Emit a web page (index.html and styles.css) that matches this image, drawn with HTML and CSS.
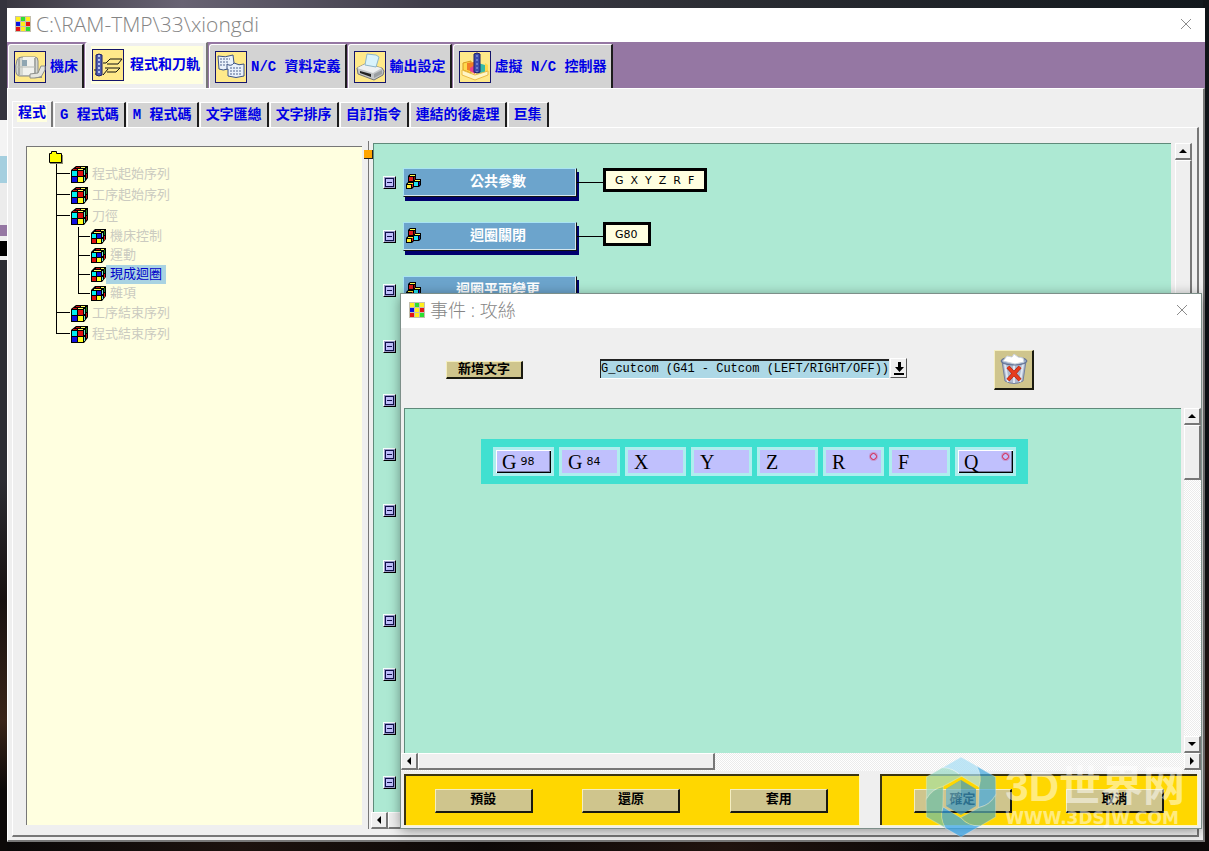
FILE: index.html
```html
<!DOCTYPE html>
<html lang="zh-Hant">
<head>
<meta charset="utf-8">
<title>C:\RAM-TMP\33\xiongdi</title>
<link rel="stylesheet" href="styles.css">
</head>
<body>
<svg class="defs" aria-hidden="true">
  <symbol id="logo" viewBox="0 0 16 16">
    <rect width="16" height="16" fill="#c4bfae"/>
    <path fill="#ffef1a" d="M1 1h4v4H1zM11 1h4v4h-4zM6 6h4v4H6zM6 11h4v4H6z"/>
    <path fill="#2ce030" d="M6 1h4v4H6zM11 11h4v4h-4z"/>
    <path fill="#0a14e0" d="M1 6h4v4H1z"/>
    <path fill="#e61414" d="M11 6h4v4h-4zM1 11h4v4H1z"/>
  </symbol>
  <symbol id="close" viewBox="0 0 12 12"><path d="M1 1l10 10M11 1L1 11" stroke="#8c8c8c" fill="none"/></symbol>
  <symbol id="cube" viewBox="0 0 17 17">
    <path d="M0 4L5 0H17V12L13 17H0z" fill="#000"/>
    <path fill="#00f0f0" d="M1 5h5v5H1z"/><path fill="#e01010" d="M7 5h5v5H7z"/>
    <path fill="#1010e0" d="M1 11h5v5H1z"/><path fill="#ffff20" d="M7 11h5v5H7z"/>
    <path fill="#c01010" d="M5 1h4v1H5zM2 3h4v1H2z"/><path fill="#ffff60" d="M10 1h4v1h-4zM7 3h5v1H7z"/>
    <path fill="#70e8d0" d="M13 4h1v5h-1zM13 11h1v4h-1z"/><path fill="#208020" d="M15 2h1v5h-1z"/><path fill="#c01010" d="M15 8h1v4h-1z"/>
  </symbol>
  <symbol id="subcube" viewBox="0 0 15 15">
    <path d="M0 4L4 0H15V10L11 15H0z" fill="#000"/>
    <path fill="#00f0f0" d="M1 5h4v4H1z"/><path fill="#1010e0" d="M6 5h4v4H6z"/>
    <path fill="#e01010" d="M1 10h4v4H1z"/><path fill="#ffff20" d="M6 10h4v4H6z"/>
    <path fill="#c01010" d="M5 1h4v1H5z"/><path fill="#ffff60" d="M10 1h3v1h-3zM3 3h7v1H3z"/>
    <path fill="#70e8d0" d="M11 4h1v4h-1zM11 10h1v3h-1z"/><path fill="#208020" d="M13 2h1v4h-1z"/><path fill="#e01010" d="M13 7h1v4h-1z"/>
  </symbol>
  <symbol id="blocks" viewBox="0 0 16 16">
    <path fill="#000" d="M2 2l2-2h6v6L8 8H2zM7 7l2-2h6v6l-2 2H7zM0 10l2-2h6v5l-2 2H0z"/>
    <path fill="#e01818" d="M3 3h4v4H3z"/><path fill="#ffff50" d="M4 1h5v1H4z"/><path fill="#901010" d="M8 3h1v3H8z"/>
    <path fill="#20e0f0" d="M8 8h4v4H8z"/><path fill="#ffff50" d="M9 6h5v1H9z"/><path fill="#1010c0" d="M13 8h1v3h-1z"/>
    <path fill="#ffee30" d="M1 11h4v3H1zM2 9h5v1H2z"/><path fill="#e01818" d="M6 10h1v3H6z"/>
  </symbol>
  <symbol id="up" viewBox="0 0 8 4"><path d="M0 4h8L4 0z"/></symbol>
  <symbol id="left" viewBox="0 0 4 8"><path d="M4 0v8L0 4z"/></symbol>
  <symbol id="blade" viewBox="0 0 72 82"><path d="M17 12L36 1 52 10Q58 20 54 31L36 20Q29 12 17 12z"/></symbol>
</svg>

<main class="window">
  <header class="titlebar">
    <svg class="logo"><use href="#logo"/></svg>
    <h1 class="title path">C:\RAM-TMP\33\xiongdi</h1>
    <button class="close" aria-label="關閉"><svg class="closeicon"><use href="#close"/></svg></button>
  </header>

  <nav class="ribbon">
    <button class="tab">
      <svg class="tabicon" viewBox="0 0 32 32"><rect x=".5" y=".5" width="31" height="31" fill="#ffe98a" stroke="#15156a"/><path d="M2 21q-1-6 1-12 1-3 5-3h13q3 0 3 4v13l-4 2H5q-3-1-3-4z" fill="#d5d8d2" stroke="#85888a"/><path d="M9 6h12v18H9z" fill="#f1f2ee"/><path d="M5 7v17M21 7v17" stroke="#a7aaa6" stroke-width="2"/><path d="M8 9h5v6H8z" fill="#8fa6b2"/><path d="M3 16h18" stroke="#b7bab4"/><path d="M16 23l8-1 3-7h4v4l-4 7-6 1h-5z" fill="#e4e5df" stroke="#8c8e8a"/><path d="M20 27l8-2v2h-8z" fill="#8c8e8a"/></svg>機床</button>
    <button class="tab active"><span class="highlight">
      <svg class="tabicon" viewBox="0 0 32 32"><rect x=".5" y=".5" width="31" height="31" fill="#ffe98a" stroke="#15156a"/><path d="M11 14h3l4-4h12l-4 5H15M2 21h8M13 19h15l-4 4h-9M11 26l5-6M3 25h6" fill="none" stroke="#111"/><path d="M4 6q3-2 6 0v20q-3 2-6 0z" fill="#4c5cb0" stroke="#202068"/><path d="M7 6v20" stroke="#b8c4ef" stroke-width="2" stroke-dasharray="2 2"/></svg>程式和刀軌</span></button>
    <button class="tab">
      <svg class="tabicon" viewBox="0 0 32 32"><rect x=".5" y=".5" width="31" height="31" fill="#ffe98a" stroke="#15156a"/><path d="M3 5q7 2 15-1l1 8q5 3 10 1v12q-8 3-16 0v-7q-5 2-9 0z" fill="#e9f1fb" stroke="#3c5384"/><path d="M12 18v-5q4 3 7-1" fill="none" stroke="#3c5384"/><path d="M5 8h10M5 11h8M5 14h6M15 17h12M15 20h12M15 23h12" stroke="#50658f" stroke-dasharray="2 1"/></svg>N/C 資料定義</button>
    <button class="tab">
      <svg class="tabicon" viewBox="0 0 32 32"><rect x=".5" y=".5" width="31" height="31" fill="#ffe98a" stroke="#15156a"/><path d="M3 17l8-4 17 4 2 3-1 4-9 5L4 23z" fill="#c3c6c8" stroke="#777"/><path d="M3 17l8-4 17 4-9 5z" fill="#eef0f0"/><path d="M13 3l9 1 3 2-3 10-11-2z" fill="#d9f3fb" stroke="#8eb6c8"/><path d="M6 20l11 3v3L6 22z" fill="#222"/><path d="M20 23l8-4v4l-8 4z" fill="#9b9fa2"/></svg>輸出設定</button>
    <button class="tab">
      <svg class="tabicon" viewBox="0 0 32 32"><rect x=".5" y=".5" width="31" height="31" fill="#ffe98a" stroke="#15156a"/><path d="M4 12l8-2v12l-8-3z" fill="#ffd94d" stroke="#d79b20"/><path d="M8 12l7-1v10l-7-2z" fill="#f27d27"/><path d="M11 17l5-3v9l-5-3z" fill="#e8418d"/><path d="M19 12l7 2v7l-7 3z" fill="#37b8a8"/><path d="M26 12l3 2v7l-3 1z" fill="#ffd94d"/><path d="M3 19l13 5 13-4v4l-13 5-13-5z" fill="#fff5c5" stroke="#ebbb45"/><path d="M15 3q3-2 6 0v18q-3 2-6 0z" fill="#3c4cb0" stroke="#202068"/><path d="M18 4v17" stroke="#9eaee8" stroke-dasharray="2 2"/></svg>虛擬 N/C 控制器</button>
  </nav>

  <section class="page">
    <nav class="subtabs">
      <button class="subtab current"><span class="mark">程式</span></button>
      <button class="subtab">G 程式碼</button>
      <button class="subtab">M 程式碼</button>
      <button class="subtab">文字匯總</button>
      <button class="subtab">文字排序</button>
      <button class="subtab">自訂指令</button>
      <button class="subtab">連結的後處理</button>
      <button class="subtab">巨集</button>
    </nav>

    <div class="panel">
      <aside class="tree">
        <svg class="folder" viewBox="0 0 14 13"><path d="M1 12h13V4" fill="none" stroke="#8a8a70" stroke-width="2"/><path d="M.5 2.5h2v-2h5v2h5v9H.5z" fill="#ff0" stroke="#000"/></svg>
        <ul class="branch">
          <li class="node"><a class="item" href="#"><svg class="cube"><use href="#cube"/></svg>程式起始序列</a></li>
          <li class="node"><a class="item" href="#"><svg class="cube"><use href="#cube"/></svg>工序起始序列</a></li>
          <li class="node"><a class="item" href="#"><svg class="cube"><use href="#cube"/></svg>刀徑</a>
            <ul class="branch sub">
              <li class="node"><a class="item" href="#"><svg class="cube"><use href="#subcube"/></svg><span class="label">機床控制</span></a></li>
              <li class="node"><a class="item" href="#"><svg class="cube"><use href="#subcube"/></svg><span class="label">運動</span></a></li>
              <li class="node"><a class="item" href="#"><svg class="cube"><use href="#subcube"/></svg><span class="label selected">現成迴圈</span></a></li>
              <li class="node"><a class="item" href="#"><svg class="cube"><use href="#subcube"/></svg><span class="label">雜項</span></a></li>
            </ul>
          </li>
          <li class="node"><a class="item" href="#"><svg class="cube"><use href="#cube"/></svg>工序結束序列</a></li>
          <li class="node"><a class="item" href="#"><svg class="cube"><use href="#cube"/></svg>程式結束序列</a></li>
        </ul>
      </aside>
      <div class="splitter"><span class="sash"></span></div>
      <div class="viewport">
        <div class="canvas">
          <div class="row"><button class="fold" aria-label="收合"></button><button class="event"><svg class="blocks"><use href="#blocks"/></svg><span class="name">公共參數</span></button><span class="wire"></span><span class="words"><span>G</span><span>X</span><span>Y</span><span>Z</span><span>R</span><span>F</span></span></div>
          <div class="row"><button class="fold" aria-label="收合"></button><button class="event"><svg class="blocks"><use href="#blocks"/></svg><span class="name">迴圈關閉</span></button><span class="wire"></span><span class="words">G80</span></div>
          <div class="row"><button class="fold" aria-label="收合"></button><button class="event"><svg class="blocks"><use href="#blocks"/></svg><span class="name">迴圈平面變更</span></button></div>
          <div class="row apart"><button class="fold" aria-label="收合"></button></div>
          <div class="row"><button class="fold" aria-label="收合"></button></div>
          <div class="row"><button class="fold" aria-label="收合"></button></div>
          <div class="row apart"><button class="fold" aria-label="收合"></button></div>
          <div class="row apart"><button class="fold" aria-label="收合"></button></div>
          <div class="row"><button class="fold" aria-label="收合"></button></div>
          <div class="row"><button class="fold" aria-label="收合"></button></div>
          <div class="row"><button class="fold" aria-label="收合"></button></div>
          <div class="row"><button class="fold" aria-label="收合"></button></div>
        </div>
        <div class="bar vertical"><button class="arrow" aria-label="向上"><svg class="tri"><use href="#up"/></svg></button><span class="thumb tall"></span></div>
        <div class="bar horizontal"><button class="arrow" aria-label="向左"><svg class="tri side"><use href="#left"/></svg></button><span class="thumb"></span></div>
      </div>
    </div>
  </section>
</main>

<section class="dialog" role="dialog" aria-labelledby="dlg">
  <header class="titlebar">
    <svg class="logo"><use href="#logo"/></svg>
    <h2 class="title" id="dlg">事件 : 攻絲</h2>
    <button class="close" aria-label="關閉"><svg class="closeicon"><use href="#close"/></svg></button>
  </header>
  <div class="toolbar">
    <button class="push add">新增文字</button>
    <div class="combo">
      <select class="pick" aria-label="文字"><option>G_cutcom (G41 - Cutcom (LEFT/RIGHT/OFF))</option></select>
      <button class="drop" aria-label="展開"><svg class="dropicon" viewBox="0 0 10 13"><path d="M4 0h3v5h3L5.500 10 1 5h3zM0 11h10v2H0z"/></svg></button>
    </div>
    <button class="push trash" aria-label="刪除"><svg class="bin" viewBox="0 0 28 32"><path d="M2 8l3 20q9 5 18 0l3-20z" fill="#aeb9cf" stroke="#75809c"/><path d="M5 11l3 18M14 12v18M23 11l-3 18" stroke="#dfe6f2" stroke-width="2"/><ellipse cx="14" cy="8" rx="13" ry="4" fill="#8fa0c0" stroke="#5d6b8c"/><path d="M3 8l4-5 5 1 2-3 4 3 5 1 1 4-9 2z" fill="#fff" stroke="#ccd3dd"/><path d="M8 14l12 13M20 14L8 27" stroke="#a01c0c" stroke-width="4"/><path d="M8 14l12 13M20 14L8 27" stroke="#e63c1e" stroke-width="3"/></svg></button>
  </div>
  <div class="viewport editor">
    <div class="canvas">
      <div class="strip">
        <button class="word raised">G<small class="num">98</small></button>
        <button class="word">G<small class="num">84</small></button>
        <button class="word">X</button>
        <button class="word">Y</button>
        <button class="word">Z</button>
        <button class="word">R<span class="dot"></span></button>
        <button class="word">F</button>
        <button class="word raised">Q<span class="dot"></span></button>
      </div>
    </div>
    <div class="bar vertical"><button class="arrow" aria-label="向上"><svg class="tri"><use href="#up"/></svg></button><span class="thumb"></span><button class="arrow" aria-label="向下"><svg class="tri flip"><use href="#up"/></svg></button></div>
    <div class="bar horizontal"><button class="arrow" aria-label="向左"><svg class="tri side"><use href="#left"/></svg></button><span class="thumb"></span><button class="arrow" aria-label="向右"><svg class="tri side flip"><use href="#left"/></svg></button></div>
  </div>
  <footer class="actions">
    <div class="group three"><button class="push">預設</button><button class="push">還原</button><button class="push">套用</button></div>
    <div class="group two"><button class="push">確定</button><button class="push">取消</button></div>
  </footer>
</section>

<div class="watermark">
  <svg class="hex" viewBox="0 0 72 82">
    <g stroke="#fff" stroke-opacity=".35">
      <use href="#blade" fill="#a9dff5"/>
      <use href="#blade" fill="#45aae0" transform="rotate(60 36 41)"/>
      <use href="#blade" fill="#5aaeb0" transform="rotate(120 36 41)"/>
      <use href="#blade" fill="#34a4ea" transform="rotate(180 36 41)"/>
      <use href="#blade" fill="#6fc0a8" transform="rotate(240 36 41)"/>
      <use href="#blade" fill="#9ddcc8" transform="rotate(300 36 41)"/>
    </g>
    <path d="M36 24l15 9v17l-15 9-15-9V33z" fill="#3e9ac4"/>
    <path d="M21 33l15-9v17l-15 9z" fill="#6cb6cc"/>
  </svg>
  <div class="brand"><span class="big">3D世界网</span><span class="site">WWW.3DSJW.COM</span></div>
</div>
</body>
</html>
```
FILE: styles.css
```css
* { box-sizing: border-box; }

html, body { height: 100%; }

body {
  margin: 0;
  position: relative;
  overflow: hidden;
  font: 14px/18px "Liberation Mono", "Noto Sans CJK TC", monospace;
  background:
    linear-gradient(#34333d 0 120px, #f4f4f4 120px 156px, #a5cfdf 156px 183px, #ececec 183px 225px, #9577a3 225px 236px, #eee 236px 241px, #000 241px 256px, #eee 256px 260px, #2c2d33 260px 480px, #17110f 600px, #3a2519 720px, #0c0908 790px) left top / 7px 100% no-repeat,
    linear-gradient(#101418, #0c1014 60%, #2a1710 90%, #0a0808) right top / 6px 100% no-repeat,
    linear-gradient(90deg, #38363f, #686373 15%, #413f4b 35%, #2b2d33 60%, #12181d) left top / 100% 8px no-repeat,
    linear-gradient(90deg, #0a0808, #1c120e 20%, #0d0908 40%, #20130e 60%, #0b0808 80%);
}

button { font: inherit; color: inherit; border: 0; padding: 0; margin: 0; background: none; }
svg { display: block; flex: none; }
.defs { position: absolute; width: 0; height: 0; }

.window {
  position: absolute;
  inset: 8px 4px 9px 7px;
  display: flex;
  flex-direction: column;
  background: #efefef;
}

.dialog {
  position: absolute;
  inset: 294px 8px 23px 401px;
  display: flex;
  flex-direction: column;
  background: #efefef;
  box-shadow: 0 0 0 1px #7d8f89, 0 2px 12px rgba(0, 0, 0, .45);
}

.titlebar {
  flex: none;
  height: 34px;
  display: flex;
  align-items: center;
  padding: 0 13px 2px 8px;
  background: #fff;
}
.logo { width: 16px; height: 16px; }
.title {
  flex: 1;
  margin: 0 0 0 5px;
  font: 300 18px/24px "Open Sans", "Noto Sans CJK TC", sans-serif;
  color: #858585;
}
.path { font-size: 21px; }
.closeicon { width: 12px; height: 12px; }

.ribbon {
  flex: none;
  height: 46px;
  display: flex;
  align-items: flex-end;
  gap: 1px;
  padding-left: 1px;
  background: #9577a3;
}
.tab {
  height: 44px;
  display: flex;
  align-items: center;
  gap: 4px;
  padding: 0 4px 0 5px;
  border-top: 1px solid #fff;
  border-left: 1px solid #fff;
  border-right: 2px solid #1c1c1c;
  border-radius: 3px 0 0 0;
  background: #d3d3d3;
  color: #0000e6;
  font-weight: bold;
}
.tab.active { height: 46px; padding: 0 3px 2px 5px; background: #efefef; border-right-color: #777; }
.highlight { display: flex; align-items: center; gap: 6px; height: 38px; padding: 0 3px 0 1px; background: #ffffe0; }
.tabicon { width: 32px; height: 32px; }

.page {
  flex: 1;
  min-height: 0;
  display: flex;
  flex-direction: column;
  padding: 12px 4px 3px 4px;
  border: 1px solid #fff;
  border-right: 2px solid #777;
  border-bottom: 2px solid #777;
}
.subtabs { display: flex; align-items: flex-end; gap: 1px; height: 26px; }
.subtab {
  height: 25px;
  padding: 0 5px;
  border-top: 1px solid #fff;
  border-left: 1px solid #fff;
  border-right: 2px solid #1c1c1c;
  background: #d3d3d3;
  color: #0000e6;
  font-weight: bold;
  white-space: nowrap;
}
.subtab.current { height: 27px; margin-bottom: -1px; background: #efefef; border-right-color: #777; padding: 0 4px 4px; }
.mark { display: block; padding: 0 1px; background: #ffffe0; }

.panel {
  flex: 1;
  min-height: 0;
  display: flex;
  padding: 13px 5px 6px 13px;
  border: 1px solid #fff;
  border-right: 2px solid #777;
  border-bottom: 2px solid #777;
}
.tree {
  flex: 0 0 336px;
  margin: 5px 0 4px;
  padding: 4px 0;
  border-top: 1px solid #777;
  border-left: 1px solid #777;
  background: #ffffe0;
  font-size: 13px;
}
.folder { width: 14px; height: 13px; margin-left: 22px; }
.branch { margin: 0 0 0 29px; padding: 0; list-style: none; }
.node { position: relative; padding-left: 15px; }
.node::before { content: ""; position: absolute; left: 0; top: 9px; width: 14px; height: 1px; background: #000; }
.node::after { content: ""; position: absolute; left: 0; top: 0; bottom: 0; width: 1px; background: #000; }
.node:last-child::after { bottom: auto; height: 10px; }
.item { display: flex; align-items: center; gap: 4px; height: 21px; color: #cbcbc0; text-decoration: none; }
.cube { width: 17px; height: 17px; }
.sub { margin-left: 7px; }
.sub .node { padding-left: 13px; }
.sub .node::before { width: 12px; }
.sub .item { height: 19px; gap: 0; }
.sub .cube { width: 15px; height: 15px; }
.label { padding: 0 4px; line-height: 19px; }
.selected { background: #a9d3e2; color: #0000c8; }

.splitter { position: relative; flex: 0 0 9px; background: linear-gradient(#777, #777) 6px 0 / 1px 100% no-repeat; }
.sash { position: absolute; z-index: 1; left: 2px; top: 9px; width: 9px; height: 9px; background: #ffa500; border-right: 1px solid #222; border-bottom: 1px solid #222; }

.viewport {
  flex: 1;
  min-width: 0;
  min-height: 0;
  margin-top: 2px;
  display: grid;
  grid-template: minmax(0, 1fr) 17px / minmax(0, 1fr) 17px;
}
.canvas {
  margin: 0 4px 0 2px;
  padding: 11px 0 0 9px;
  overflow: hidden;
  border-top: 1px solid #5f8a7a;
  border-left: 1px solid #5f8a7a;
  background: #ade9d3;
}
.row { display: flex; align-items: center; height: 54px; }
.apart { margin-top: 2px; }
.fold {
  width: 13px;
  height: 13px;
  margin-right: 7px;
  border: 1px solid #f4fffb;
  border-right-color: #000;
  border-bottom-color: #000;
  background: linear-gradient(#10104a, #10104a) center / 5px 1px no-repeat #c0c0fd;
  box-shadow: inset 0 0 0 1px #9a9ac8, inset 0 0 0 2px #10104a;
}
.event {
  width: 174px;
  height: 29px;
  display: flex;
  align-items: center;
  padding: 0 2px;
  border: 1px solid #a9e4f2;
  border-right: 1px solid #111;
  border-bottom: 1px solid #111;
  background: #6ca4cc;
  box-shadow: inset -1px -1px #d5e6ee, 2px 4px #00006e;
  color: #fff;
  font-weight: bold;
}
.blocks { width: 16px; height: 16px; }
.name { flex: 1; text-align: center; }
.wire { width: 26px; height: 1px; background: #000; }
.words {
  display: flex;
  gap: 7px;
  align-items: center;
  height: 24px;
  margin-bottom: 4px;
  padding: 1px 10px 0 9px;
  border: 3px solid #000;
  background: #ffffe0;
  font: 11px/16px "DejaVu Sans", sans-serif;
}

.bar {
  display: flex;
  background: repeating-conic-gradient(#fff 0 25%, #ebebeb 0 50%) 0 0 / 2px 2px;
}
.bar.vertical { flex-direction: column; }
.bar.horizontal { grid-column: 1 / 3; }
.arrow, .thumb {
  flex: none;
  background: #efefef;
  border: 1px solid #fff;
  border-right: 2px solid #777;
  border-bottom: 2px solid #777;
}
.arrow { width: 17px; height: 17px; display: grid; place-items: center; }
.tri { width: 8px; height: 4px; }
.tri.side { width: 4px; height: 8px; }
.flip { transform: rotate(180deg); }
.thumb.tall { flex: 1; }
.horizontal .thumb { width: 208px; }

.toolbar { flex: none; height: 80px; display: flex; align-items: center; padding-left: 45px; }
.push {
  background: #cfc58d;
  border: 1px solid #f4eec0;
  border-right: 2px solid #1a1a10;
  border-bottom: 2px solid #1a1a10;
  color: #000;
  font-size: 13px;
  font-weight: bold;
}
.add { width: 77px; height: 18px; margin-top: 4px; line-height: 15px; }
.combo { display: flex; align-items: center; gap: 1px; margin-left: 77px; }
.pick {
  appearance: none;
  width: 289px;
  height: 19px;
  margin: 0;
  padding: 0;
  border: 0 solid #222;
  border-width: 2px 0 0 1px;
  border-radius: 0;
  box-shadow: 0 1px #fff;
  background: #add8e6;
  color: #000;
  font: 12px/16px "Liberation Mono", monospace;
}
.drop { width: 17px; height: 20px; display: grid; place-items: center; border: 1px solid #fff; border-right: 1px solid #555; border-bottom: 1px solid #555; }
.dropicon { width: 10px; height: 13px; }
.trash { width: 40px; height: 40px; margin-left: 87px; margin-top: 3px; display: grid; place-items: center; }
.bin { width: 28px; height: 32px; }

.editor { margin: 0; grid-template-rows: minmax(0, 1fr) 18px; }
.editor .canvas { margin: 0 3px 0 3px; padding: 30px 0 0 76px; }
.editor .vertical .thumb { height: 55px; }
.editor .vertical .arrow:last-child { margin-top: auto; }
.editor .horizontal .arrow:last-child { margin-left: auto; }
.editor .horizontal .thumb { width: 297px; height: 17px; }

.strip { display: inline-flex; gap: 5px; padding: 8px 12px; background: #40e0d0; vertical-align: top; }
.word {
  position: relative;
  width: 61px;
  height: 29px;
  display: flex;
  align-items: center;
  gap: 4px;
  padding: 0 0 0 6px;
  border: 3px solid #afeeee;
  background: #c0c0fd;
  color: #000;
  font: 20px/22px "Liberation Serif", serif;
}
.raised { box-shadow: inset 1px 1px #fff, inset -1px -1px #000, inset -2px -2px #77779c; }
.num { font: 11px/16px "DejaVu Sans", sans-serif; }
.dot { position: absolute; right: 4px; top: 3px; width: 7px; height: 7px; border: 1px solid #d81840; border-radius: 50%; box-shadow: 0 0 0 1px rgba(216, 24, 64, .25); }

.actions { flex: none; display: grid; grid-template-columns: 455fr 317fr; gap: 21px; height: 57px; padding: 3px 4px 3px 3px; }
.group {
  display: grid;
  align-items: center;
  justify-items: center;
  border: 0 solid #3a3410;
  border-width: 2px 0 0 2px;
  background: #ffd700;
  box-shadow: 1px 1px #fff8c0;
}
.group .push { width: 98px; height: 24px; }
.three { grid-template-columns: repeat(3, 1fr); padding: 0 6px 0 4px; }
.two { grid-template-columns: repeat(2, 1fr); padding: 0 6px 0 5px; }

.watermark {
  position: absolute;
  right: 24px;
  bottom: 13px;
  display: flex;
  align-items: center;
  gap: 8px;
  pointer-events: none;
}
.hex { width: 72px; height: 82px; opacity: .72; }
.brand { display: flex; flex-direction: column; color: rgba(255, 255, 255, .5); white-space: nowrap; }
.big { font: bold 42px/42px "Liberation Sans", "Noto Sans CJK SC", sans-serif; }
.site { font: bold 17px/20px "DejaVu Sans", sans-serif; }
```
